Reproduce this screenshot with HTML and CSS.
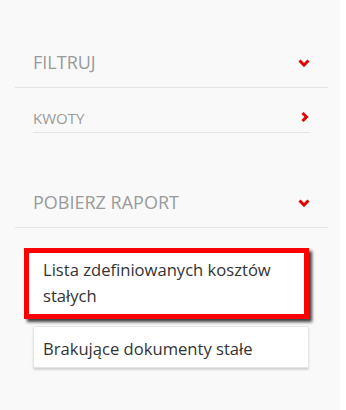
FILE: index.html
```html
<!DOCTYPE html>
<html lang="pl">
<head>
    <meta charset="UTF-8">
    <meta name="viewport" content="width=device-width, initial-scale=1.0">
    <title>Raporty</title>
    <link rel="stylesheet" href="styles.css">
</head>
<body>
    <div class="sidebar">
        <div class="section">
            <div class="section-head">
                <span>FILTRUJ</span>
                <svg class="chev-down" width="12" height="8" viewBox="0 0 12 8"><polyline points="1.5,1.5 6,6 10.5,1.5"/></svg>
            </div>
            <div class="sub-row">
                <span>KWOTY</span>
                <svg class="chev-right" width="8" height="10" viewBox="0 0 8 10"><polyline points="1.5,1 5.5,5 1.5,9"/></svg>
            </div>
        </div>

        <div class="section report">
            <div class="section-head">
                <span>POBIERZ RAPORT</span>
                <svg class="chev-down" width="12" height="8" viewBox="0 0 12 8"><polyline points="1.5,1.5 6,6 10.5,1.5"/></svg>
            </div>
            <div class="report-list">
                <div class="report-item active">Lista zdefiniowanych kosztów stałych</div>
                <div class="report-item">Brakujące dokumenty stałe</div>
            </div>
        </div>
    </div>
</body>
</html>
```

FILE: styles.css
```css
body { margin: 0; background: #fff; font-family: "Open Sans", "Liberation Sans", sans-serif; }
.sidebar { width: 340px; height: 410px; background: #f9f9f9; padding-top: 40px; box-sizing: border-box; }
.section { margin: 0 12px 0 15px; }
.section-head {
    display: flex;
    align-items: center;
    justify-content: space-between;
    height: 48px;
    box-sizing: border-box;
    padding: 0 18px 4px;
    border-bottom: 1px solid #e3e3e3;
    color: #9a9a9a;
    font-size: 18px;
}
.sub-row {
    display: flex;
    justify-content: space-between;
    align-items: center;
    margin: 0 18px;
    padding: 18px 0 2px;
    line-height: 24px;
    border-bottom: 1px solid #e3e3e3;
    color: #9a9a9a;
    font-size: 15px;
}
.chev-down { margin-top: 2px; }
.chev-right { margin-top: -2px; margin-right: 1px; }
svg polyline { fill: none; stroke: #e00000; stroke-width: 3; }
.report { margin-top: 47px; }
.report-list { padding-top: 20px; }
.report-item {
    margin: 0 19px 0 18px;
    padding: 9px 9px 6px;
    background: #fff;
    border: 1px solid #e6e6e6;
    border-radius: 2px;
    box-shadow: 0 2px 2px rgba(0, 0, 0, .15);
    color: #333;
    font-size: 16.6px;
    line-height: 25px;
}
.report-item.active {
    margin: 0 19px 7px 9px;
    padding: 4px 14px 5px;
    line-height: 26px;
    border: 5px solid #f00;
    border-radius: 0;
    box-shadow: 3px 3px 3px rgba(0, 0, 0, .75);
}
```
